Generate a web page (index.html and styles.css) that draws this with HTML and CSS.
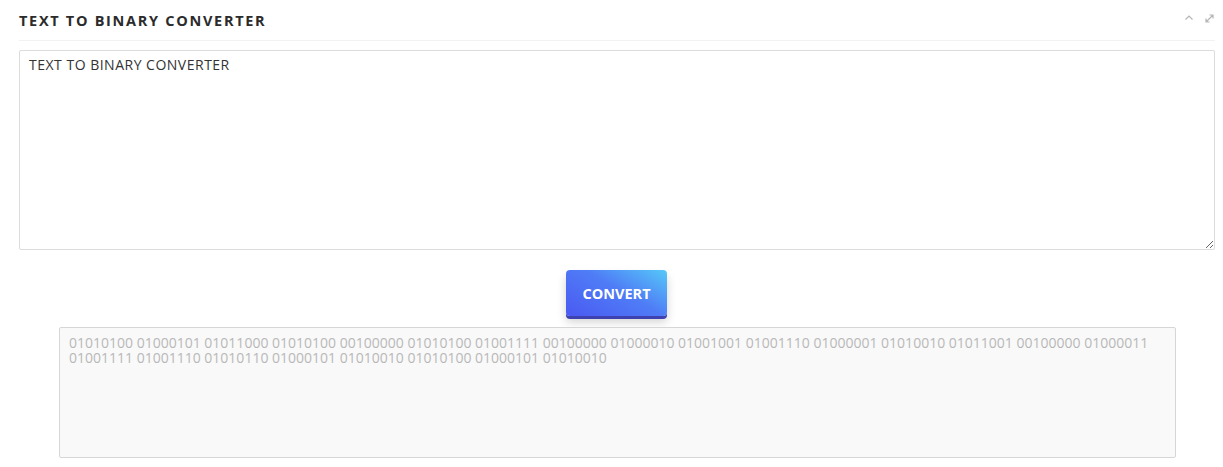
FILE: index.html
```html
<!DOCTYPE html>
<html>
<head>
<meta charset="utf-8">
<link rel="stylesheet" href="styles.css">
</head>
<body>
<div class="panel">
  <div class="panel-head">
    <h2 class="title">TEXT TO BINARY CONVERTER</h2>
    <div class="tools">
      <svg class="ico" width="10" height="8" viewBox="0 0 10 8"><path d="M1.5 5.5 L5 2 L8.5 5.5" fill="none" stroke="#b5b5b5" stroke-width="1.2"/></svg>
      <svg class="ico" width="11" height="11" viewBox="0 0 11 11"><path d="M2 9 L9 2 M5.5 2 H9 V5.5 M2 5.5 V9 H5.5" fill="none" stroke="#b5b5b5" stroke-width="1.2"/></svg>
    </div>
  </div>
  <div class="panel-body">
    <textarea class="input">TEXT TO BINARY CONVERTER</textarea>
    <div class="actions"><button class="btn">CONVERT</button></div>
    <textarea class="output" readonly>01010100 01000101 01011000 01010100 00100000 01010100 01001111 00100000 01000010 01001001 01001110 01000001 01010010 01011001 00100000 01000011 01001111 01001110 01010110 01000101 01010010 01010100 01000101 01010010</textarea>
  </div>
</div>
</body>
</html>
```
FILE: styles.css
```css
html, body { margin: 0; padding: 0; background: #fff; }
body { font-family: "Open Sans", "Liberation Sans", sans-serif; overflow: hidden; }
.panel { padding: 0 8px 0 19px; }
.panel-head {
  display: flex; align-items: center; justify-content: space-between;
  height: 40px; border-bottom: 1px solid #f2f2f2; margin-bottom: 9px;
}
.title {
  margin: 0; font-size: 14.5px; font-weight: 700; letter-spacing: 1.7px; color: #2b2b2b;
}
.tools { display: flex; align-items: center; gap: 10px; margin-top: -4px; }
.ico { display: block; }
.panel-body { display: flex; flex-direction: column; }
.input {
  box-sizing: border-box; width: 1196px; height: 200px; margin: 0;
  border: 1px solid #dcdcdc; border-radius: 2px; padding: 5px 9px;
  font-family: "Open Sans", sans-serif; font-size: 14px; letter-spacing: 0.5px; color: #333; line-height: 18px;
  outline: none; resize: vertical; background: #fff;
}
.actions { display: flex; justify-content: center; padding: 20px 0 11px; margin-left: -1px; }
.btn {
  width: 101px; height: 46px; border: 0; border-radius: 4px;
  background: linear-gradient(30deg, #4a59f2 0%, #4f7df6 55%, #55c8f8 100%);
  color: #fff; font-family: "Open Sans", sans-serif; font-weight: 700; font-size: 14.5px;
  box-shadow: 0 3px 0 #3e41b0, 0 6px 10px rgba(0,0,0,0.18);
}
.output {
  box-sizing: border-box; width: 1117px; height: 131px; margin: 0 0 0 40px;
  border: 1px solid #d6d6d6; border-radius: 2px; padding: 7px 9px;
  background: #f9f9f9; color: #b8b8b8;
  font-family: "Open Sans", sans-serif; font-size: 14px; line-height: 15px;
  resize: none; outline: none;
}
```
